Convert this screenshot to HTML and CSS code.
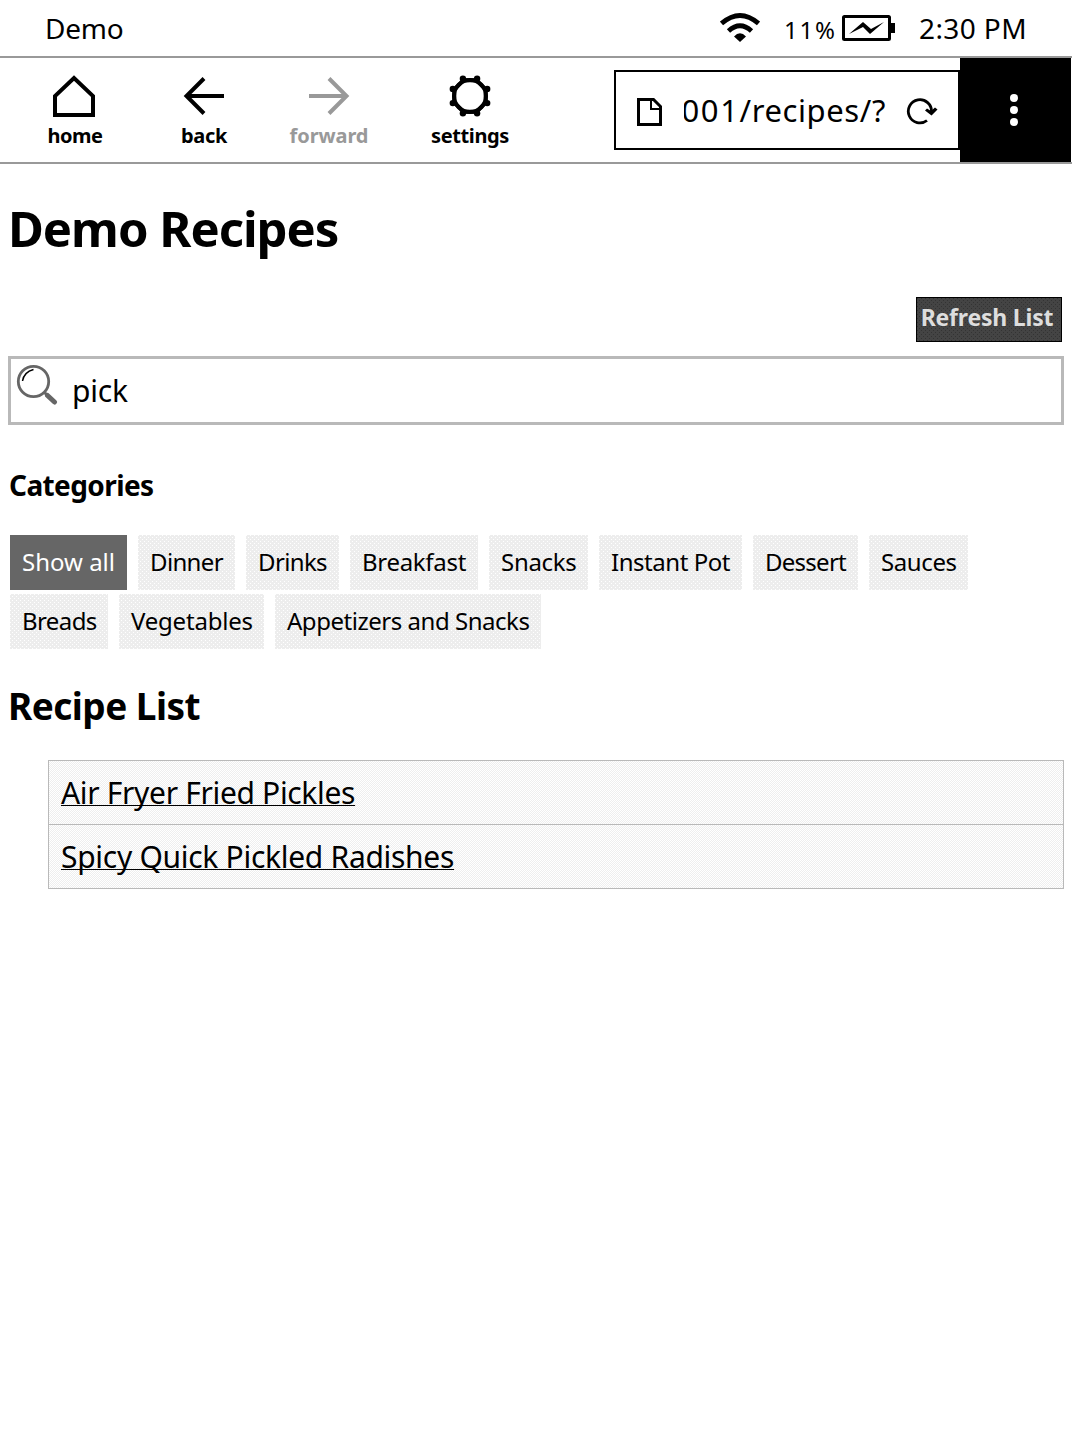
FILE: index.html
```html
<!DOCTYPE html>
<html lang="en">
<head>
<meta charset="utf-8">
<title>Demo Recipes</title>
<link rel="stylesheet" href="styles.css">
</head>
<body>
<header class="status">
  <span class="device">Demo</span>
  <svg class="wifi" width="40" height="30" viewBox="0 0 40 30"><path d="M1.500 10.500Q20-5.500 38.500 10.500M8.500 18Q20 7.500 31.500 18" fill="none" stroke="#000" stroke-width="4.800"/><path d="M14 23.500Q20 17 26 23.500L20 29Z"/></svg>
  <span class="percent">11%</span>
  <svg class="battery" width="53" height="26" viewBox="0 0 53 26"><rect x="1.500" y="1.500" width="46" height="23" rx="1" fill="none" stroke="#000" stroke-width="3"/><path d="M48 8h5v10h-5zM7 19 21 7 29 14 42 7 28 19 21 12Z"/></svg>
  <span class="clock">2:30 PM</span>
</header>
<nav class="toolbar">
  <a class="tool home"><svg width="44" height="44" viewBox="0 0 44 44"><path d="M2 41V22L21 4 40 22V41Z" fill="none" stroke="currentColor" stroke-width="4"/></svg><span>home</span></a>
  <a class="tool back"><svg width="44" height="44" viewBox="0 0 44 44"><path d="M42 22H5M22 4.500 4.500 22 22 39.500" fill="none" stroke="currentColor" stroke-width="4"/></svg><span>back</span></a>
  <a class="tool forward"><svg width="44" height="44" viewBox="0 0 44 44"><path d="M2 22H39M22 4.500 39.500 22 22 39.500" fill="none" stroke="currentColor" stroke-width="4"/></svg><span>forward</span></a>
  <a class="tool settings"><svg width="44" height="44" viewBox="0 0 44 44"><path d="M28.500 6.300 37.700 15.500V28.500L28.500 37.700H15.500L6.300 28.500V15.500L15.500 6.300Z" fill="none" stroke="currentColor" stroke-width="4"/><circle cx="22" cy="22" r="16" fill="none" stroke="currentColor" stroke-width="4"/><g fill="currentColor"><circle cx="29.100" cy="4.800" r="3.200"/><circle cx="39.200" cy="14.900" r="3.200"/><circle cx="39.200" cy="29.100" r="3.200"/><circle cx="29.100" cy="39.200" r="3.200"/><circle cx="14.900" cy="39.200" r="3.200"/><circle cx="4.800" cy="29.100" r="3.200"/><circle cx="4.800" cy="14.900" r="3.200"/><circle cx="14.900" cy="4.800" r="3.200"/></g></svg><span>settings</span></a>
  <div class="address">
    <svg class="page" width="25" height="28" viewBox="0 0 25 28"><path d="M1.500 1.500H16.500L23.500 8.500V26.500H1.500Z" fill="none" stroke="#000" stroke-width="3"/><path d="M14 2V11H23" fill="none" stroke="#000" stroke-width="2"/></svg>
    <div class="url"><span><span class="port">001</span>/recipes/?</span></div>
    <svg class="reload" width="32" height="28" viewBox="0 0 32 28"><path d="M21 23.500A11.600 11.600 0 1 1 25.500 15" fill="none" stroke="#000" stroke-width="2.800"/><path d="M19 13.500 21 11.500 25 14 29 10.500 31.500 12.500 25.500 18.500Z"/></svg>
  </div>
  <button class="menu" aria-label="Menu"><i></i><i></i><i></i></button>
</nav>
<main>
  <h1>Demo Recipes</h1>
  <button class="refresh">Refresh List</button>
  <div class="search">
    <svg width="42" height="42" viewBox="0 0 42 42"><circle cx="17.500" cy="17.500" r="15.200" fill="none" stroke="#666" stroke-width="2.800"/><path d="M28 28 31 31" stroke="#666" stroke-width="3"/><path d="M31.500 31.500 38.500 38" stroke="#666" stroke-width="5" stroke-linecap="round"/><path d="M6.500 17Q8 8 17.500 5.500" fill="none" stroke="#000" stroke-width="1.500"/></svg>
    <span>pick</span>
  </div>
  <h3>Categories</h3>
  <div class="tags">
    <a class="tag show-all">Show all</a>
    <a class="tag dinner">Dinner</a>
    <a class="tag drinks">Drinks</a>
    <a class="tag breakfast">Breakfast</a>
    <a class="tag snacks">Snacks</a>
    <a class="tag instant-pot">Instant Pot</a>
    <a class="tag dessert">Dessert</a>
    <a class="tag sauces">Sauces</a>
    <a class="tag breads">Breads</a>
    <a class="tag vegetables">Vegetables</a>
    <a class="tag appetizers">Appetizers and Snacks</a>
  </div>
  <h2>Recipe List</h2>
  <ul class="recipes">
    <li><a>Air Fryer Fried Pickles</a></li>
    <li><a class="second">Spicy Quick Pickled Radishes</a></li>
  </ul>
</main>
</body>
</html>
```
FILE: styles.css
```css
* { box-sizing: border-box; }
body { margin: 0; font-family: "Noto Sans", sans-serif; color: #000; background: #fff; }
svg { display: block; flex: none; }
button { border: 0; border-radius: 0; padding: 0; font-family: inherit; }

.status { display: flex; align-items: center; height: 58px; padding: 0 43px 0 45px; border-bottom: 2px solid #999; font-size: 28px; white-space: nowrap; }
.device { margin-right: auto; letter-spacing: -.2px; }
.percent { width: 54px; margin: 2px 4px 0 24px; font-size: 24px; letter-spacing: 1.8px; }
.clock { width: 110px; margin-left: 24px; letter-spacing: .4px; }

.toolbar { display: flex; height: 106px; border-bottom: 2px solid #999; }
.tool { display: flex; flex-direction: column; align-items: center; gap: 6px; padding-top: 16px; font-size: 20px; line-height: 24px; font-weight: 700; }
.home { width: 150px; letter-spacing: -.5px; }
.back { width: 108px; letter-spacing: -.3px; }
.forward { width: 142px; color: #999; letter-spacing: -.1px; }
.settings { width: 140px; letter-spacing: -.4px; }
.address { display: flex; align-items: center; width: 346px; height: 80px; margin: 12px 0 0 74px; border: 2px solid #000; padding-left: 21px; }
.page { margin-top: 3px; }
.url { display: flex; justify-content: flex-end; width: 202px; margin: 0 20px 0 22px; overflow: hidden; font-size: 31px; letter-spacing: .6px; line-height: 50px; }
.port { letter-spacing: 1.6px; }
.reload { margin-top: 2px; }
.menu { display: flex; flex-direction: column; align-items: center; justify-content: center; gap: 4px; width: 111px; padding-right: 3px; background: #000; }
.menu i { width: 8px; height: 8px; border-radius: 50%; background: #fff; }

main { display: flex; flex-direction: column; padding: 34px 8px 0; }
h1, h2, h3 { margin: 0; }
h1 { font-size: 49px; line-height: 60px; letter-spacing: -1px; }
.refresh { align-self: flex-end; width: 146px; height: 45px; margin: 39px 2px 14px 0; padding: 0 4px 5px 0; border: 1px solid #000; font-size: 23px; line-height: 38px; font-weight: 700; color: #ddd; letter-spacing: -.2px;
  background: conic-gradient(at 1px 1px, transparent 75%, #333 0) 0 0 / 4px 4px, conic-gradient(at 1px 1px, transparent 75%, #333 0) 2px 2px / 4px 4px, #444; }
.search { display: flex; height: 69px; border: 3px solid #b9b9b9; font-size: 30px; line-height: 63px; }
.search svg { margin: 5px 14px 0 5px; }
.search span { letter-spacing: -.2px; }
h3 { margin-top: 42px; font-size: 28px; line-height: 36px; letter-spacing: -.6px; padding-left: 1px; }
.tags { display: flex; flex-wrap: wrap; gap: 4px 11px; margin: 32px 2px 0; }
.tag { height: 55px; padding-left: 12px; font-size: 24px; line-height: 54px; white-space: nowrap;
  background: conic-gradient(at 1px 1px, transparent 75%, #fff 0) 0 0 / 4px 4px, conic-gradient(at 1px 1px, transparent 75%, #fff 0) 2px 2px / 4px 4px, #ededed; }
.show-all { width: 117px; color: #fff; background: #666; }
.dinner { width: 97px; letter-spacing: -.64px; }
.drinks { width: 93px; letter-spacing: -.63px; }
.breakfast { width: 128px; letter-spacing: -.3px; }
.snacks { width: 99px; letter-spacing: -.3px; }
.instant-pot { width: 143px; letter-spacing: -.45px; }
.dessert { width: 105px; letter-spacing: -.74px; }
.sauces { width: 99px; letter-spacing: -.4px; }
.breads { width: 98px; letter-spacing: -.6px; }
.vegetables { width: 145px; letter-spacing: -.2px; }
.appetizers { width: 266px; letter-spacing: -.47px; }
h2 { margin-top: 33px; font-size: 37px; line-height: 48px; letter-spacing: -.55px; }
.recipes { margin: 30px 0 0 40px; padding: 0; list-style: none; border: 1px solid #b9b9b9; border-top: 0; font-size: 30px; line-height: 63px; }
.recipes li { height: 64px; padding-left: 12px; border-top: 1px solid #b9b9b9; background: conic-gradient(#eee 25%, #fff 0 50%, #eee 0 75%, #fff 0) 0 0 / 2px 2px; }
.recipes a { letter-spacing: -.33px; text-decoration: underline; text-decoration-thickness: 1px; text-underline-offset: 1px; text-decoration-skip-ink: none; }
.recipes .second { letter-spacing: -.29px; }
```
